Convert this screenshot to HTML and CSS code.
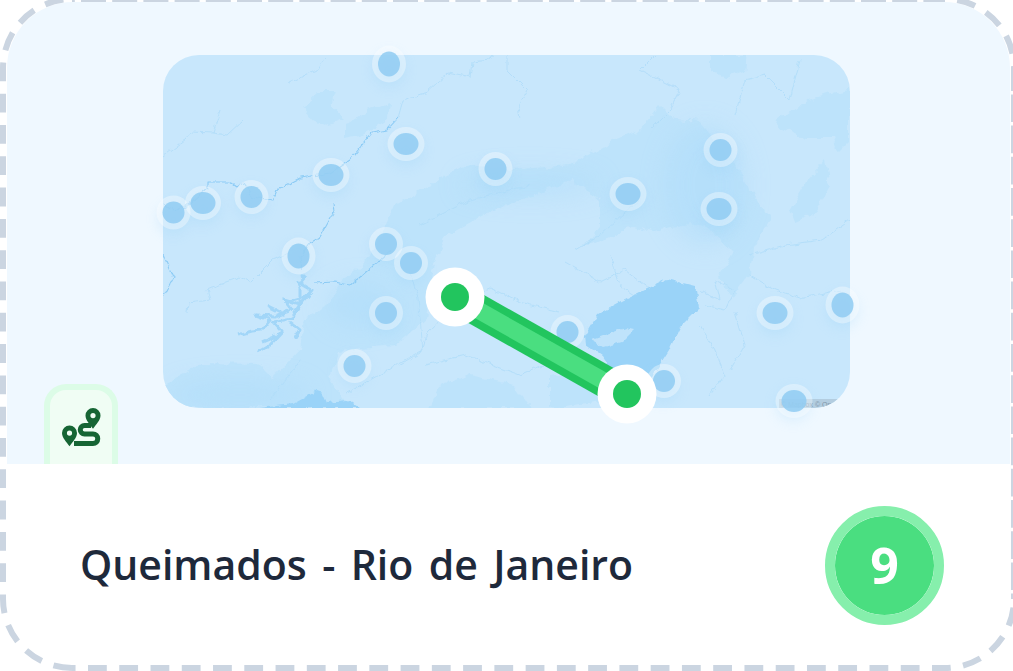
FILE: index.html
```html
<!DOCTYPE html>
<html lang="pt">
<head>
<meta charset="utf-8">
<title>Queimados - Rio de Janeiro</title>
<link rel="stylesheet" href="styles.css">
</head>
<body>
<div class="page">
  <main class="card">
    <section class="hero">
      <svg class="map" viewBox="163 55 687 353" width="687" height="353" aria-label="Mapa">
        <defs>
          <clipPath id="mapClip"><rect x="163" y="55" width="687" height="353" rx="36"/></clipPath>
          <filter id="rough" x="-5%" y="-5%" width="110%" height="110%" color-interpolation-filters="sRGB">
            <feTurbulence type="fractalNoise" baseFrequency="0.09" numOctaves="3" seed="4"/>
            <feDisplacementMap in="SourceGraphic" scale="10" xChannelSelector="R" yChannelSelector="G"/>
          </filter>
          <filter id="wiggle" x="-5%" y="-5%" width="110%" height="110%" color-interpolation-filters="sRGB">
            <feTurbulence type="fractalNoise" baseFrequency="0.14" numOctaves="2" seed="9"/>
            <feDisplacementMap in="SourceGraphic" scale="6" xChannelSelector="R" yChannelSelector="G"/>
          </filter>
          <filter id="soft" x="-30%" y="-30%" width="160%" height="160%"><feGaussianBlur stdDeviation="12"/></filter>
          <filter id="glow" x="-100%" y="-100%" width="300%" height="300%"><feGaussianBlur stdDeviation="7"/></filter>
        </defs>
        <g clip-path="url(#mapClip)">
          <rect class="base" x="163" y="55" width="687" height="353"/>
          <g class="terrain" filter="url(#rough)">
            <path d="M163 385 L203 363 L258 364 L272 378 L300 348 L305 320 L328 303 L345 278 L372 254 L395 205 L445 176 L470 165 L510 170 L570 165 L612 142 L640 130 L660 105 L675 120 L700 122 L732 160 L770 220 L753 250 L750 273 L733 297 L718 278 L733 253 L708 227 L690 223 L650 232 L633 227 L583 247 L600 227 L600 200 L573 180 L500 207 L444 237 L432 270 L425 320 L395 345 L340 350 L330 380 L350 408 L163 408 Z"/>
            <path d="M775 122 L808 100 L840 92 L850 90 L850 140 L838 152 L832 138 L805 138 L780 128 Z"/>
            <path d="M808 180 L825 160 L830 185 L812 215 L795 222 L790 210 Z"/>
            <path d="M710 55 L748 55 L746 70 L725 78 L710 70 Z"/>
            <path d="M303 108 L320 92 L335 92 L331 105 L345 118 L325 126 L312 120 Z"/>
            <path d="M345 125 L365 112 L390 102 L388 118 L360 135 L345 138 Z"/>
            <path d="M440 385 L470 375 L515 385 L530 408 L430 408 Z"/>
            <path d="M550 375 L600 365 L610 400 L550 408 Z"/>
          </g>
          <g class="haze" filter="url(#soft)">
            <ellipse cx="705" cy="185" rx="40" ry="60"/>
            <ellipse cx="360" cy="305" rx="34" ry="22"/>
            <ellipse cx="530" cy="185" rx="70" ry="12"/>
            <ellipse cx="240" cy="395" rx="70" ry="14"/>
          </g>
          <g class="lake" filter="url(#wiggle)">
            <path d="M585 336 L598 314 L620 302 L648 288 L667 279 L695 286 L699 308 L680 327 L669 350 L655 372 L642 392 L620 408 L608 398 L612 372 L602 356 L586 345 Z"/>
            <path d="M260 408 L293 404 L317 391 L323 393 L327 402 L347 400 L360 408 Z"/>
            <path d="M780 408 L790 398 L800 408 Z"/>
          </g>
          <g class="lake-edge" filter="url(#wiggle)">
            <path d="M592 340 L625 328 L634 330 L622 342 L604 347 Z"/>
          </g>
          <g filter="url(#wiggle)">
            <path class="river river-wide" d="M238 335 L252 331 L262 330 L270 320 L256 315 L275 316 L292 310 L284 300 L300 305 L300 290 L298 282 L312 290 L302 302 L292 318 L273 322 L282 332 L270 345 L258 352"/>
            <path class="river river-wide" d="M292 300 L306 296 M280 312 L268 306 M290 322 L300 330 L294 340 M276 336 L262 342 M300 282 L305 276"/>
            <path class="river river-mid" d="M163 203 L173 210 L185 207 L208 187 L208 182 L230 182 L237 187 L243 183 L253 197 L273 200 L277 190 L300 178 L330 173 L350 160 L372 133 L387 130 L398 118"/>
            <path class="river river-mid" d="M333 203 L334 212 L320 237 L310 243 L300 257 L302 270"/>
            <path class="river river-mid" d="M163 255 L173 278 L163 297"/>
            <path class="river river-mid" d="M315 283 L333 282 L350 285 L360 277 L380 260 L392 250"/>
            <path class="river" d="M398 118 L403 100 L427 92 L448 73 L470 78 L472 62 L490 60 L493 55"/>
            <path class="river" d="M507 55 L507 70 L527 90 L518 107 L520 118"/>
            <path class="river" d="M163 157 L185 140 L192 132 L213 133 L220 110"/>
            <path class="river" d="M213 133 L227 135 L243 120"/>
            <path class="river" d="M290 83 L317 70 L325 57"/>
            <path class="river" d="M410 273 L418 297 L423 350 L400 363 L347 393"/>
            <path class="river" d="M400 365 L420 353 L428 333 L462 300 L490 288 L520 302 L560 312"/>
            <path class="river" d="M240 277 L227 282 L207 290 L210 300 L188 303 L187 313"/>
            <path class="river" d="M240 277 L250 283 L273 260 L288 253"/>
            <path class="river" d="M610 255 L620 285 L635 295"/>
            <path class="river" d="M565 262 L600 282 L625 270 L650 290"/>
            <path class="river" d="M700 290 L720 300 L715 280 L735 290 L725 310 L705 305"/>
            <path class="river" d="M700 325 L715 350 L725 375 L710 395"/>
            <path class="river" d="M735 312 L745 345 L730 370"/>
            <path class="river" d="M750 275 L775 290 L800 298 L840 290"/>
            <path class="river" d="M750 255 L785 245 L822 240 L850 220"/>
            <path class="river" d="M650 130 L670 110 L680 90 L640 70 L655 55"/>
            <path class="river" d="M735 115 L745 80 L765 75 L790 100 L800 60"/>
            <path class="river" d="M425 365 L465 355 L520 375 L555 360"/>
            <path class="river" d="M300 360 L270 400"/>
            <path class="river" d="M640 200 L600 235 L575 250"/>
            <path class="river" d="M420 225 L470 200 L530 185"/>
          </g>
          <rect class="attrib-bg" x="779" y="399" width="71" height="9"/>
          <text class="attrib" x="781" y="407">© Mapbox © OpenStreetMap</text>
        </g>
        <g class="glows" filter="url(#glow)">
          <ellipse cx="389" cy="70" rx="15" ry="16"/>
          <ellipse cx="406" cy="150" rx="16" ry="15"/>
          <circle cx="495" cy="175" r="14"/>
          <ellipse cx="331" cy="181" rx="16" ry="15"/>
          <circle cx="720" cy="156" r="14"/>
          <ellipse cx="627" cy="199" rx="16" ry="15"/>
          <ellipse cx="719" cy="215" rx="16" ry="15"/>
          <circle cx="173" cy="219" r="14"/>
          <ellipse cx="203" cy="209" rx="16" ry="15"/>
          <circle cx="251" cy="202" r="14"/>
          <ellipse cx="298" cy="261" rx="15" ry="16"/>
          <circle cx="385" cy="249" r="14"/>
          <circle cx="410" cy="269" r="14"/>
          <circle cx="386" cy="319" r="14"/>
          <circle cx="354" cy="371" r="14"/>
          <circle cx="567" cy="337" r="14"/>
          <circle cx="663" cy="387" r="14"/>
          <ellipse cx="775" cy="319" rx="16" ry="15"/>
          <ellipse cx="842" cy="311" rx="15" ry="16"/>
          <ellipse cx="793" cy="405" rx="16" ry="15"/>
        </g>
        <g class="markers">
          <g><ellipse class="ring" cx="389" cy="64" rx="17" ry="18.5"/><ellipse class="dot" cx="389" cy="64" rx="11" ry="12.5"/></g>
          <g><ellipse class="ring" cx="406" cy="144" rx="18.5" ry="17"/><ellipse class="dot" cx="406" cy="144" rx="12.5" ry="11"/></g>
          <g><circle class="ring" cx="495.500" cy="169" r="17"/><circle class="dot" cx="495.500" cy="169" r="11"/></g>
          <g><ellipse class="ring" cx="331" cy="175" rx="18.500" ry="17"/><ellipse class="dot" cx="331" cy="175" rx="12.500" ry="11"/></g>
          <g><circle class="ring" cx="720.500" cy="150" r="17"/><circle class="dot" cx="720.500" cy="150" r="11"/></g>
          <g><ellipse class="ring" cx="628" cy="194" rx="18.500" ry="17"/><ellipse class="dot" cx="628" cy="194" rx="12.500" ry="11"/></g>
          <g><ellipse class="ring" cx="719" cy="209" rx="18.500" ry="17"/><ellipse class="dot" cx="719" cy="209" rx="12.500" ry="11"/></g>
          <g><circle class="ring" cx="173.500" cy="212.500" r="17"/><circle class="dot" cx="173.500" cy="212.500" r="11"/></g>
          <g><ellipse class="ring" cx="203" cy="203" rx="18" ry="17"/><ellipse class="dot" cx="203" cy="203" rx="12.500" ry="11"/></g>
          <g><circle class="ring" cx="251.500" cy="197" r="17"/><circle class="dot" cx="251.500" cy="197" r="11"/></g>
          <g><ellipse class="ring" cx="298.500" cy="256" rx="17" ry="18.500"/><ellipse class="dot" cx="298.500" cy="256" rx="11" ry="12.500"/></g>
          <g><circle class="ring" cx="386" cy="244" r="17"/><circle class="dot" cx="386" cy="244" r="11"/></g>
          <g><circle class="ring" cx="411" cy="263" r="17"/><circle class="dot" cx="411" cy="263" r="11"/></g>
          <g><circle class="ring" cx="386" cy="313" r="17"/><circle class="dot" cx="386" cy="313" r="11"/></g>
          <g><circle class="ring" cx="354.500" cy="366" r="17"/><circle class="dot" cx="354.500" cy="366" r="11"/></g>
          <g><circle class="ring" cx="567.500" cy="332" r="17"/><circle class="dot" cx="567.500" cy="332" r="11"/></g>
          <g><circle class="ring" cx="664" cy="381" r="17"/><circle class="dot" cx="664" cy="381" r="11"/></g>
          <g><ellipse class="ring" cx="775" cy="313" rx="18.500" ry="17"/><ellipse class="dot" cx="775" cy="313" rx="12.500" ry="11"/></g>
          <g><ellipse class="ring" cx="842.500" cy="305" rx="17" ry="18.500"/><ellipse class="dot" cx="842.500" cy="305" rx="11" ry="12.500"/></g>
          <g><ellipse class="ring" cx="794" cy="401" rx="18.500" ry="17"/><ellipse class="dot" cx="794" cy="401" rx="12.500" ry="11"/></g>
        </g>
        <line class="route-outer" x1="455" y1="297" x2="627" y2="394"/>
        <line class="route-inner" x1="455" y1="297" x2="627" y2="394"/>
        <circle class="stop-ring" cx="455" cy="297" r="29.500"/>
        <circle class="stop-dot" cx="455" cy="297" r="14"/>
        <circle class="stop-ring" cx="627" cy="394" r="29.500"/>
        <circle class="stop-dot" cx="627" cy="394" r="14"/>
      </svg>
      <div class="route-tab">
        <svg class="route-icon" viewBox="59 405 44 44" width="44" height="44" aria-hidden="true">
          <path class="icon-fill" fill-rule="evenodd" d="M69.500 425.500a7.500 7.500 0 0 1 7.500 7.500c0 4.800-4.500 9-7.500 13.300-3-4.300-7.500-8.500-7.500-13.300a7.500 7.500 0 0 1 7.500-7.500zm0 5a2.600 2.600 0 1 0 0 5.200 2.600 2.600 0 0 0 0-5.200z"/>
          <path class="icon-fill" fill-rule="evenodd" d="M93 408a7.500 7.500 0 0 1 7.500 7.500c0 4.800-4.500 9-7.500 13.300-3-4.300-7.500-8.500-7.500-13.300a7.500 7.500 0 0 1 7.500-7.500zm0 5a2.600 2.600 0 1 0 0 5.200 2.600 2.600 0 0 0 0-5.200z"/>
          <path class="icon-line" d="M91 425.500H84.500a4.250 4.250 0 0 0 0 8.500H93a4.750 4.750 0 0 1 0 9.500H74"/>
        </svg>
      </div>
    </section>
    <section class="footer">
      <h1 class="title">Queimados - Rio de Janeiro</h1>
      <div class="score">9</div>
    </section>
  </main>
  <svg class="dashes" viewBox="0 0 1013 671" width="1013" height="671" aria-hidden="true">
    <path class="dash-a" d="M72-1A69 69 0 0 0 3 68V599A69 69 0 0 0 72 668"/>
    <path class="dash-b" d="M72 668H945A69 69 0 0 0 1014 599"/>
    <path class="dash-c" d="M945-1A69 69 0 0 1 1014 68"/>
    <path class="dash-top" d="M72-1H945"/>
    <path class="dash-right" d="M1014 68V599"/>
  </svg>
</div>
</body>
</html>
```
FILE: styles.css
```css
* { box-sizing: border-box; }

html, body {
  margin: 0;
  padding: 0;
  background: #ffffff;
}

.page {
  position: relative;
  width: 1013px;
  height: 671px;
  padding: 2px 3px 7px 7px;
  overflow: hidden;
}

.card {
  display: flex;
  flex-direction: column;
  height: 662px;
  border-radius: 66px;
  overflow: hidden;
  background: #ffffff;
}

.hero {
  position: relative;
  flex: 0 0 462px;
  padding: 53px 0 0 156px;
  background: #eff8ff;
}

.map {
  display: block;
  overflow: visible;
}

.base { fill: #c8e7fc; }
.haze { fill: #aedcfa; opacity: 0.5; }
.terrain { fill: #bde3fb; }
.lake { fill: #9ad3f8; }
.lake-edge { fill: #bfe3fb; }

.river {
  fill: none;
  stroke: #afdcf9;
  stroke-width: 0.8;
  stroke-linejoin: round;
}
.river-mid { stroke: #8ccbf5; stroke-width: 1.1; }
.river-wide { stroke: #a2d6f8; stroke-width: 3; }

.attrib-bg { fill: #b3cde0; }
.attrib {
  font-family: "Liberation Sans", sans-serif;
  font-size: 7px;
  fill: #7f95a8;
}

.glows { fill: #8ccdf7; opacity: 0.25; }
.ring { fill: #ffffff; fill-opacity: 0.36; }
.dot { fill: #8fcbf2; fill-opacity: 0.85; }

.route-outer {
  stroke: #22c55e;
  stroke-width: 32;
}
.route-inner {
  stroke: #4ade80;
  stroke-width: 17;
}
.stop-ring { fill: #ffffff; }
.stop-dot { fill: #22c55e; }

.route-tab {
  position: absolute;
  left: 37px;
  bottom: 0;
  display: flex;
  justify-content: center;
  padding-top: 15px;
  width: 74px;
  height: 80px;
  background: #f0fdf4;
  border: 6px solid #dcfce7;
  border-bottom: 0;
  border-radius: 22px 22px 0 0;
}

.route-icon { display: block; }
.icon-fill { fill: #166534; }
.icon-line {
  fill: none;
  stroke: #166534;
  stroke-width: 5;
}

.footer {
  flex: 1;
  display: flex;
  align-items: center;
  justify-content: space-between;
  padding: 2px 66px 0 73px;
  background: #ffffff;
}

.title {
  margin: 0;
  font-family: "Open Sans", "Noto Sans", sans-serif;
  font-size: 41px;
  font-weight: 600;
  word-spacing: 4.700px;
  line-height: 1.2;
  color: #1e293b;
}

.score {
  display: flex;
  align-items: center;
  justify-content: center;
  width: 119px;
  height: 119px;
  border: 10px solid #86efac;
  border-radius: 50%;
  background: #4ade80;
  background-clip: padding-box;
  font-family: "Open Sans", "Noto Sans", sans-serif;
  font-size: 50px;
  font-weight: 700;
  color: #ffffff;
}

.dashes {
  position: absolute;
  left: 0;
  top: 0;
  fill: none;
  stroke: #cbd5e1;
  stroke-width: 6;
  overflow: hidden;
}

.dash-a { stroke-dasharray: 18.800 12.500; stroke-dashoffset: 22.600; }
.dash-b { stroke-dasharray: 18.800 12.460; stroke-dashoffset: 15.260; }
.dash-c { stroke-dasharray: 18.800 12.500; stroke-dashoffset: 19; }
.dash-top { stroke-dasharray: 25 6.200; stroke-dashoffset: 22.200; }
.dash-right { stroke-dasharray: 27.700 3.500; stroke-dashoffset: 4.800; }
```
